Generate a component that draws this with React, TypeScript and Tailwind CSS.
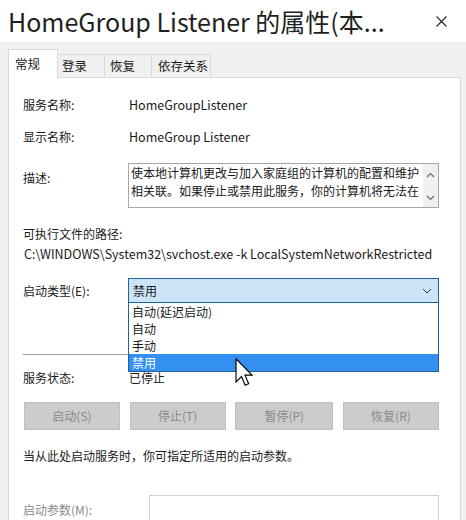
import React from "react";

const Chevron = ({ up }: { up?: boolean }) => (
  <svg width="9" height="6" viewBox="0 0 9 6">
    <path
      d={up ? "M1 5 L4.5 1.5 L8 5" : "M1 1 L4.5 4.5 L8 1"}
      fill="none"
      stroke="#6b6b6b"
      strokeWidth="1.2"
    />
  </svg>
);

export default function App() {
  const labelCls = "w-[106px] shrink-0";
  return (
    <div className="relative w-[466px] h-[520px] overflow-hidden bg-[#f0f0f0] text-[12px] leading-[18px] text-[#1a1a1a] whitespace-nowrap font-['Noto_Sans_CJK_SC','Noto_Sans',sans-serif]">
      {/* title bar */}
      <div className="h-[42px] bg-white flex items-center justify-between pl-[8px] pr-[19px]">
        <div className="text-[25px] leading-[32px] text-[#1f1f1f] whitespace-nowrap">
          HomeGroup Listener 的属性(本...
        </div>
        <svg width="11" height="11" viewBox="0 0 11 11">
          <path d="M0.5 0.5 L10.5 10.5 M10.5 0.5 L0.5 10.5" stroke="#222" strokeWidth="1.1" />
        </svg>
      </div>

      {/* tabs */}
      <div className="flex items-end pl-[8px] pt-[7px] h-[35px] text-[12.5px]">
        <div className="relative z-10 w-[50px] h-[29px] bg-white border border-b-0 border-[#d9d9d9] pl-[6px] pt-[5px] -mb-[1px]">
          常规
        </div>
        <div className="w-[47px] h-[23px] border border-l-0 border-b-0 border-[#d9d9d9] pl-[4px] pt-[2px]">
          登录
        </div>
        <div className="w-[47px] h-[23px] border border-l-0 border-b-0 border-[#d9d9d9] pl-[5px] pt-[2px]">
          恢复
        </div>
        <div className="w-[59px] h-[23px] border border-l-0 border-b-0 border-[#d9d9d9] pl-[6px] pt-[2px]">
          依存关系
        </div>
      </div>

      {/* panel */}
      <div className="ml-[8px] mr-[5px] h-[460px] bg-white border border-[#d9d9d9] pl-[14px] pr-[21px]">
        <div className="flex items-center h-[18px] mt-[18px]">
          <div className={labelCls}>服务名称:</div>
          <div className="text-[12.5px]">HomeGroupListener</div>
        </div>
        <div className="flex items-center h-[18px] mt-[14px]">
          <div className={labelCls}>显示名称:</div>
          <div className="text-[12.5px]">HomeGroup Listener</div>
        </div>
        <div className="flex items-start mt-[17px]">
          <div className={`${labelCls} pt-[6px]`}>描述:</div>
          <div className="-ml-[1px] flex-1 h-[45px] border border-[#a8a8a8] flex">
            <div className="flex-1 pl-[2px] text-[#1a1a1a]">
              使本地计算机更改与加入家庭组的计算机的配置和维护
              <br />
              相关联。如果停止或禁用此服务，你的计算机将无法在
            </div>
            <div className="w-[15px] bg-[#f0f0f0] flex flex-col items-center justify-between pt-[8px] pb-[6px]">
              <Chevron up />
              <Chevron />
            </div>
          </div>
        </div>
        <div className="h-[18px] mt-[17px]">可执行文件的路径:</div>
        <div className="h-[18px] mt-[2px] text-[12.5px] pl-[1px]">
          C:\WINDOWS\System32\svchost.exe -k LocalSystemNetworkRestricted
        </div>
        <div className="flex items-center mt-[15px]">
          <div className={labelCls}>启动类型(E):</div>
          <div className="relative -ml-[1px] flex-1">
            <div className="h-[25px] bg-[#cce4f7] border border-[#24609c] flex items-center justify-between pl-[4px] pr-[6px]">
              <span>禁用</span>
              <svg width="10" height="6" viewBox="0 0 10 6">
                <path d="M1 1 L5 5 L9 1" fill="none" stroke="#333" strokeWidth="1" />
              </svg>
            </div>
            <div className="absolute z-20 left-0 right-0 top-full -mt-[1px] bg-white border border-[#24609c] flex flex-col">
              <div className="h-[17px] leading-[17px] pl-[3px]">自动(延迟启动)</div>
              <div className="h-[17px] leading-[17px] pl-[3px]">自动</div>
              <div className="h-[17px] leading-[17px] pl-[3px]">手动</div>
              <div className="h-[17px] leading-[17px] pl-[3px] bg-[#3390f0] text-white">禁用</div>
            </div>
          </div>
        </div>
        <div className="h-[1px] bg-[#a0a0a0] mt-[51px]" />
        <div className="flex items-center h-[18px] mt-[14px]">
          <div className={labelCls}>服务状态:</div>
          <div>已停止</div>
        </div>
        <div className="flex justify-between mt-[15px] pl-[1px] text-[#8a8a8a]">
          <div className="w-[96px] h-[28px] bg-[#cccccc] border border-[#c0c0c0] flex items-center justify-center">启动(S)</div>
          <div className="w-[96px] h-[28px] bg-[#cccccc] border border-[#c0c0c0] flex items-center justify-center">停止(T)</div>
          <div className="w-[98px] h-[28px] bg-[#cccccc] border border-[#c0c0c0] flex items-center justify-center">暂停(P)</div>
          <div className="w-[96px] h-[28px] bg-[#cccccc] border border-[#c0c0c0] flex items-center justify-center">恢复(R)</div>
        </div>
        <div className="h-[18px] mt-[17px]">当从此处启动服务时，你可指定所适用的启动参数。</div>
        <div className="flex items-start mt-[30px]">
          <div className="w-[126px] shrink-0 pt-[6px] text-[#8a8a8a]">启动参数(M):</div>
          <div className="flex-1 h-[40px] border border-[#cfcfcf]" />
        </div>
      </div>

      {/* mouse cursor */}
      <svg className="absolute left-[235px] top-[358px] z-30" width="18" height="29" viewBox="0 0 12 20">
        <path
          d="M0.5 0.5 L0.5 16.5 L4.3 12.8 L6.8 18.8 L9.2 17.8 L6.7 11.8 L11.5 11.8 Z"
          fill="white"
          stroke="black"
          strokeWidth="0.8"
          strokeLinejoin="miter"
        />
      </svg>
    </div>
  );
}
